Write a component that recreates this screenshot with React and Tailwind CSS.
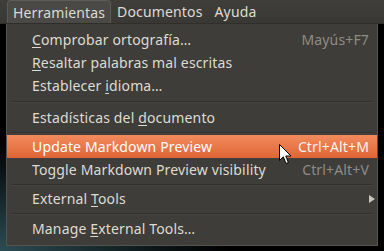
import React from 'react';

const font = { fontFamily: '"Noto Sans", "Open Sans", sans-serif' };

const Sep = ({ h = 'h-[9px]' }) => (
    <div className={`${h} flex items-center px-[4px]`}>
        <div className="h-px w-full bg-[#31302c] shadow-[0_1px_0_#46453f]" />
    </div>
);

const Item = ({ children, shortcut, active, submenu }) => (
    <div
        className={
            'h-[23px] flex items-center pl-[25px] pr-[8px] ' +
            (active
                ? 'bg-gradient-to-b from-[#f28b5c] to-[#df6535] text-white'
                : 'text-[#dfdbd2]')
        }
    >
        <span className="flex-1 whitespace-nowrap">{children}</span>
        {shortcut && (
            <span className={active ? 'text-[#fff3ec]' : 'text-[#8f8c86]'}>{shortcut}</span>
        )}
        {submenu && (
            <svg width="6" height="8" viewBox="0 0 6 8" className="mr-[-6px]">
                <path d="M0 0 L6 4 L0 8 Z" fill="#c9c6bf" />
            </svg>
        )}
    </div>
);

export default function App() {
    return (
        <div
            className="relative w-[384px] h-[251px] overflow-hidden text-[14px] tracking-[0.15px] bg-[radial-gradient(ellipse_60%_45%_at_0%_100%,#2c4c53,#0b1416_70%,#000)]"
            style={font}
        >
            <div className="h-[24px] flex items-end pl-[7px] bg-gradient-to-b from-[#3f3e3a] to-[#393834] border-b border-[#2f2e2a] text-[#dfdbd2]">
                <div className="h-[23px] px-[5px] flex items-center rounded-t-[4px] border border-b-0 border-[#5c5b56] bg-[#4a4945]">
                    Herramientas
                </div>
                <div className="h-[23px] px-[6px] flex items-center">Documentos</div>
                <div className="h-[23px] px-[6px] flex items-center">Ayuda</div>
            </div>

            <div className="ml-[6px] w-[372px] pt-[4px] pb-[5px] bg-[#3e3d39] border-x border-b border-[#55534e]">
                <Item shortcut="Mayús+F7">
                    <span className="underline underline-offset-2">C</span>omprobar ortografía…
                </Item>
                <Item>
                    <span className="underline underline-offset-2">R</span>esaltar palabras mal escritas
                </Item>
                <Item>
                    Establecer <span className="underline underline-offset-2">i</span>dioma…
                </Item>
                <Sep />
                <Item>
                    Estadísticas del <span className="underline underline-offset-2">d</span>ocumento
                </Item>
                <Sep h="h-[6px]" />
                <Item active shortcut="Ctrl+Alt+M">Update Markdown Preview</Item>
                <Item shortcut="Ctrl+Alt+V">Toggle Markdown Preview visibility</Item>
                <Sep h="h-[6px]" />
                <Item submenu>
                    External <span className="underline underline-offset-2">T</span>ools
                </Item>
                <Sep h="h-[7px]" />
                <Item>
                    Manage <span className="underline underline-offset-2">E</span>xternal Tools…
                </Item>
            </div>

            <svg
                className="absolute left-[279px] top-[144px]"
                width="13"
                height="21"
                viewBox="0 0 13 21"
            >
                <path
                    d="M0.5 0.5 L0.5 16.5 L4.3 12.8 L7 19.5 L9.4 18.5 L6.8 12 L12 12 Z"
                    fill="#ffffff"
                    stroke="#000000"
                    strokeWidth="1"
                    strokeLinejoin="round"
                />
            </svg>
        </div>
    );
}
